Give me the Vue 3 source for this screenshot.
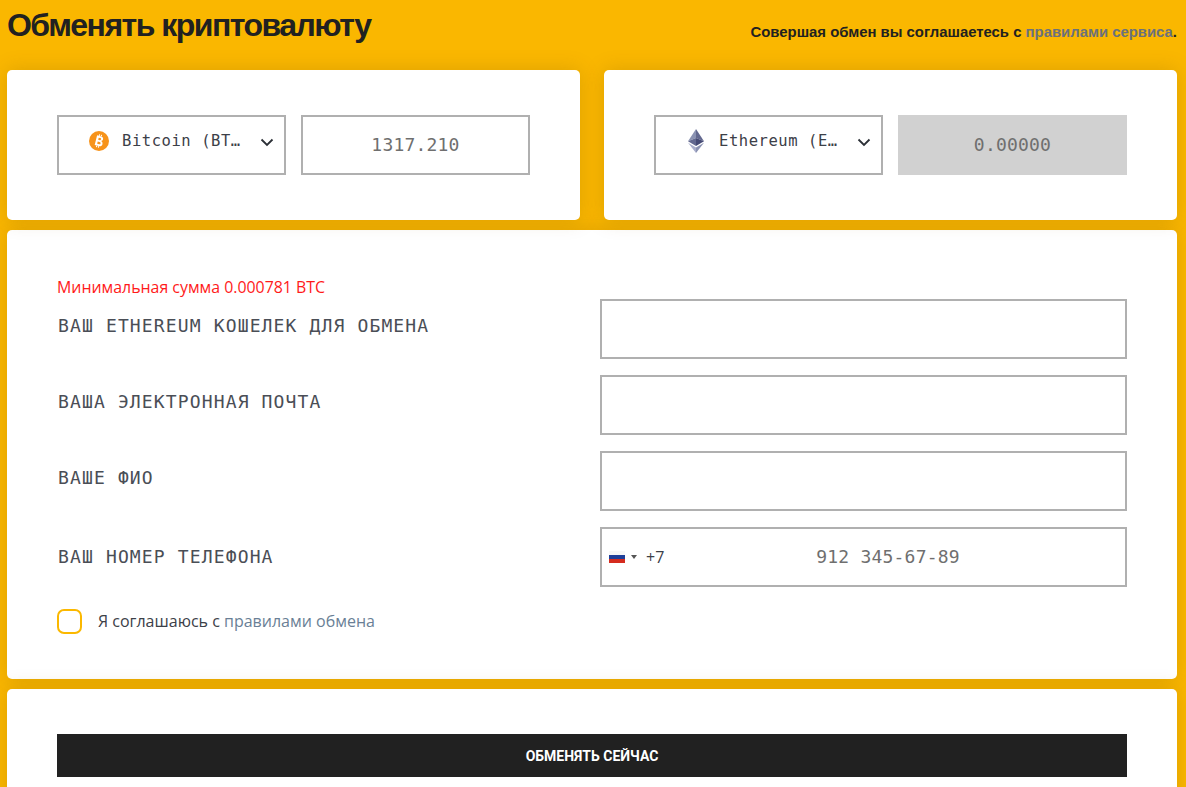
<script setup>
const fields = [
  { label: 'ВАШ ETHEREUM КОШЕЛЕК ДЛЯ ОБМЕНА' },
  { label: 'ВАША ЭЛЕКТРОННАЯ ПОЧТА' },
  { label: 'ВАШЕ ФИО' }
]
</script>

<template>
  <div class="page">
    <header class="head">
      <h1 class="title">Обменять криптовалюту</h1>
      <p class="rules">Совершая обмен вы соглашаетесь с <a class="rules-link">правилами сервиса</a>.</p>
    </header>

    <div class="pair">
      <section class="card swap">
        <div class="box select">
          <svg class="coin" width="20" height="20" viewBox="0 0 20 20">
            <circle cx="10" cy="10" r="10" fill="#f7931a" />
            <g transform="rotate(14 10 10)">
              <path d="M6.800 5h4.200c1.600 0 2.500 1 2.500 2.300 0 1-.5 1.800-1.500 2.300 1.300.4 2.100 1.300 2.100 2.600 0 1.700-1.200 2.800-3.100 2.800H6.800zM8.900 6.800v2.200h1.700c.7 0 1-.5 1-1.100s-.4-1.100-1-1.100zM8.900 10.800v2.400h2c.8 0 1.200-.5 1.200-1.200s-.5-1.200-1.200-1.200z" fill="#fff" fill-rule="evenodd" />
              <path d="M9 3.400V5M11 3.400V5M9 15v1.600M11 15v1.600" stroke="#fff" stroke-width="1.100" fill="none" />
            </g>
          </svg>
          <span class="coin-name">Bitcoin (BT…</span>
          <svg class="chev" width="14" height="9" viewBox="0 0 14 9"><path d="M1.500 1.500 7 7l5.500-5.500" fill="none" stroke="#2b2f36" stroke-width="1.800" /></svg>
        </div>
        <div class="box value">1317.210</div>
      </section>

      <section class="card swap">
        <div class="box select">
          <svg class="coin eth" width="20" height="24" viewBox="0 0 16 24">
            <polygon points="8,0 0,12.200 8,9" fill="#8a92b2" />
            <polygon points="8,0 16,12.200 8,9" fill="#62688f" />
            <polygon points="0,12.200 8,9 8,17" fill="#62688f" />
            <polygon points="16,12.200 8,9 8,17" fill="#454a75" />
            <polygon points="0,13.800 8,24 8,18.600" fill="#a9aecb" />
            <polygon points="16,13.800 8,24 8,18.600" fill="#8a92b2" />
          </svg>
          <span class="coin-name">Ethereum (E…</span>
          <svg class="chev" width="14" height="9" viewBox="0 0 14 9"><path d="M1.500 1.500 7 7l5.500-5.500" fill="none" stroke="#2b2f36" stroke-width="1.800" /></svg>
        </div>
        <div class="box value locked">0.00000</div>
      </section>
    </div>

    <section class="card form">
      <p class="minimum">Минимальная сумма 0.000781 BTC</p>
      <div class="rows">
        <div v-for="f in fields" :key="f.label" class="row">
          <span class="label">{{ f.label }}</span>
          <div class="box field"></div>
        </div>
        <div class="row phone-row">
          <span class="label">ВАШ НОМЕР ТЕЛЕФОНА</span>
          <div class="box field phone">
            <span class="flag"><i class="w"></i><i class="b"></i><i class="r"></i></span>
            <span class="caret"></span>
            <span class="dial">+7</span>
            <span class="number">912 345-67-89</span>
          </div>
        </div>
      </div>
      <label class="agree">
        <span class="check"></span>
        <span class="agree-text">Я соглашаюсь с <a class="agree-link">правилами обмена</a></span>
      </label>
    </section>

    <section class="card submit">
      <button class="go" type="button">ОБМЕНЯТЬ СЕЙЧАС</button>
    </section>
  </div>
</template>

<style>
html, body { margin: 0; height: 787px; overflow: hidden; background: #fab700; }
</style>

<style scoped>
.page {
  box-sizing: border-box;
  width: 1186px;
  height: 787px;
  padding: 0 9px 0 7px;
  overflow: hidden;
  background: #fab700;
}
.head {
  display: flex;
  justify-content: space-between;
  height: 70px;
}
.title {
  margin: 6px 0 0 0;
  font: 700 32px/38px "Liberation Sans", Arial, sans-serif;
  letter-spacing: -1.520px;
  color: #212121;
}
.rules {
  margin: 23px 0 0;
  font: 700 14.880px/18px "Liberation Sans", Arial, sans-serif;
  color: #212121;
}
.rules-link { color: #6a717d; }
.pair {
  display: grid;
  grid-template-columns: 573px 573px;
  gap: 24px;
}
.card {
  box-sizing: border-box;
  background: #fff;
  border-radius: 5px;
  box-shadow: 0 0 20px rgba(120, 80, 0, 0.22);
}
.swap {
  display: grid;
  grid-template-columns: 229px 229px;
  gap: 15px;
  height: 150px;
  padding: 45px 50px;
}
.box {
  box-sizing: border-box;
  height: 60px;
  border: 2px solid #b0b0b0;
  background: #fff;
}
.select {
  display: flex;
  align-items: center;
  padding: 0 10px 8px 30px;
}
.coin { flex: none; }
.coin-name {
  flex: 1;
  margin-left: 13px;
  font: 15.500px/20px "DejaVu Sans Mono", monospace;
  letter-spacing: 0.560px;
  color: #3c4048;
  white-space: nowrap;
}
.chev { flex: none; margin-top: 3px; }
.value {
  padding-top: 16px;
  text-align: center;
  font: 18px/24px "DejaVu Sans Mono", monospace;
  letter-spacing: 0.200px;
  color: #6f6f6f;
}
.locked {
  border-color: #d1d1d1;
  background: #d1d1d1;
}
.form {
  height: 449px;
  margin-top: 10px;
  padding: 47px 50px 0;
}
.minimum {
  margin: 0;
  height: 22px;
  font: 15.900px/20px "Open Sans", sans-serif;
  color: #ff1a1a;
}
.rows {
  display: flex;
  flex-direction: column;
  gap: 16px;
}
.row {
  display: grid;
  grid-template-columns: 543px 527px;
  height: 60px;
}
.label {
  padding: 15px 0 0 1px;
  font: 18px/24px "DejaVu Sans Mono", monospace;
  letter-spacing: 1.140px;
  color: #4a4e56;
  white-space: nowrap;
}
.phone-row .label { padding-top: 18px; }
.phone {
  display: flex;
  align-items: center;
  padding-left: 7px;
}
.flag {
  display: flex;
  flex-direction: column;
  width: 16px;
  height: 12px;
}
.flag i { flex: 1; }
.w { background: #f7f7f7; }
.b { background: #1f3f99; }
.r { background: #d52b1e; }
.caret {
  width: 0;
  height: 0;
  margin-left: 6px;
  border-left: 3px solid transparent;
  border-right: 3px solid transparent;
  border-top: 4px solid #555;
}
.dial {
  margin-left: 9px;
  font: 16px/20px "Open Sans", sans-serif;
  color: #3c4048;
}
.number {
  margin-left: 152px;
  font: 18px/24px "DejaVu Sans Mono", monospace;
  letter-spacing: 0.200px;
  color: #6f6f6f;
}
.agree {
  display: flex;
  align-items: center;
  margin-top: 22px;
}
.check {
  box-sizing: border-box;
  width: 25px;
  height: 25px;
  border: 2px solid #fbb800;
  border-radius: 7px;
}
.agree-text {
  margin-left: 16px;
  margin-top: -2px;
  font: 16px/20px "Open Sans", sans-serif;
  color: #3c4048;
}
.agree-link { color: #6a7f96; }
.submit {
  height: 140px;
  margin-top: 10px;
  padding: 45px 50px;
}
.go {
  display: block;
  width: 100%;
  height: 43px;
  border: 0;
  background: #212121;
  color: #fff;
  font: 700 14px/43px "Roboto", sans-serif;
}
</style>
